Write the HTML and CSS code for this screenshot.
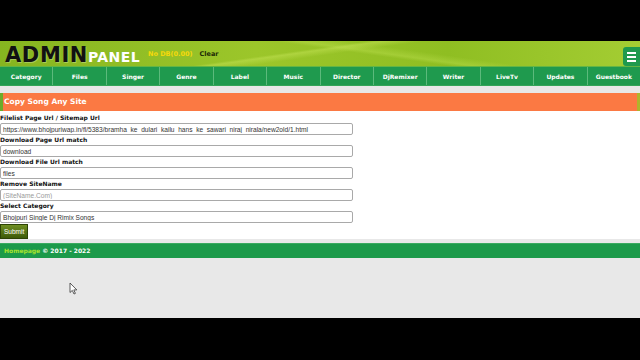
FILE: index.html
```html
<!DOCTYPE html>
<html lang="en">
<head>
    <meta charset="UTF-8" />
    <meta name="viewport" content="width=device-width, initial-scale=1.0"/>
    <title>Admin Panel - Copy Song Any Site</title>
    <link rel="stylesheet" href="styles.css">
</head>
<body>
    <div class="page">
        <div class="header">
            <div class="logo"><span class="admin">ADMIN</span><span class="panel">PANEL</span></div>
            <span class="db">No DB(0.00)</span>
            <a class="clear" href="#">Clear</a>
            <div class="menu-btn">
                <span></span><span></span><span></span>
            </div>
        </div>

        <div class="nav">
            <a href="#">Category</a>
            <a href="#">Files</a>
            <a href="#">Singer</a>
            <a href="#">Genre</a>
            <a href="#">Label</a>
            <a href="#">Music</a>
            <a href="#">Director</a>
            <a href="#">DjRemixer</a>
            <a href="#">Writer</a>
            <a href="#">LiveTv</a>
            <a href="#">Updates</a>
            <a href="#">Guestbook</a>
        </div>

        <div class="title">Copy Song Any Site</div>

        <form class="form">
            <label>Filelist Page Url / Sitemap Url</label>
            <input type="text" value="https://www.bhojpuriwap.in/fl/5383/bramha_ke_dulari_kailu_hans_ke_sawari_niraj_nirala/new2old/1.html">
            <label>Download Page Url match</label>
            <input type="text" value="download">
            <label>Download File Url match</label>
            <input type="text" value="files">
            <label>Remove SiteName</label>
            <input type="text" placeholder="(SiteName.Com)">
            <label>Select Category</label>
            <input type="text" value="Bhojpuri Single Dj Rimix Songs">
            <button type="button" class="submit">Submit</button>
        </form>

        <div class="footer">
            <a href="#">Homepage</a> &copy; 2017 - 2022
        </div>

        <div class="bottom">
            <svg class="cursor" width="9" height="13" viewBox="0 0 9 13">
                <path d="M1 1 L1 10.5 L3.3 8.4 L5 12 L6.4 11.4 L4.8 7.9 L7.8 7.9 Z" fill="#fff" stroke="#333" stroke-width="0.8"/>
            </svg>
        </div>
    </div>
</body>
</html>
```

FILE: styles.css
```css
body {
    margin: 0;
    background: #000;
    padding-top: 41px;
    height: 360px;
    box-sizing: border-box;
    font-family: "DejaVu Sans", Verdana, sans-serif;
}

.page {
    width: 640px;
    height: 277px;
    background: #e8e8e8;
    overflow: hidden;
}

.header {
    height: 25px;
    display: flex;
    align-items: center;
    padding-left: 5px;
    background:
        linear-gradient(172deg, transparent 45%, rgba(200, 230, 90, 0.45) 47%, transparent 52%),
        linear-gradient(8deg, transparent 55%, rgba(190, 225, 80, 0.4) 58%, transparent 64%),
        linear-gradient(90deg, #86b520 0%, #9cc62a 40%, #8fbe22 70%, #a4cd33 100%);
    box-sizing: border-box;
}

.logo {
    display: flex;
    align-items: baseline;
    margin-top: 2px;
}

.admin {
    font-size: 21px;
    font-weight: bold;
    color: #111;
    letter-spacing: 0.6px;
    text-shadow: 1px 1px 0 rgba(255, 255, 255, 0.25);
}

.panel {
    font-size: 14px;
    font-weight: bold;
    color: #fff;
    letter-spacing: 0.4px;
}

.db {
    margin-left: 8px;
    font-size: 6.5px;
    font-weight: bold;
    color: #f5d90a;
}

.clear {
    margin-left: 7px;
    font-size: 6.5px;
    font-weight: bold;
    color: #1d2a06;
    text-decoration: none;
}

.menu-btn {
    margin-left: auto;
    margin-top: 6px;
    width: 17px;
    height: 19px;
    background: #1f9a4e;
    border-radius: 3px 0 0 3px;
    display: flex;
    flex-direction: column;
    justify-content: center;
    align-items: center;
    gap: 2px;
}

.menu-btn span {
    display: block;
    width: 9px;
    height: 2px;
    background: #fff;
}

.nav {
    display: flex;
    height: 18px;
    background: #1f9a4e;
    border-top: 1px solid #63b544;
    border-bottom: 1px solid #33a558;
}

.nav a {
    flex: 1;
    display: flex;
    align-items: center;
    justify-content: center;
    color: #fff;
    font-size: 6px;
    font-weight: bold;
    text-decoration: none;
    border-left: 1px solid #5cba7c;
}

.nav a:first-child {
    border-left: none;
}

.title {
    margin-top: 7px;
    height: 18px;
    line-height: 18px;
    background: #fb7943;
    border-left: 3px solid #6cab2a;
    border-right: 3px solid #b0b42c;
    color: #fff;
    font-size: 7.5px;
    font-weight: bold;
    padding-left: 1px;
}

.form {
    background: #fff;
    padding-top: 2px;
    height: 128px;
    display: flex;
    flex-direction: column;
    align-items: flex-start;
    box-sizing: border-box;
}

.form label {
    font-size: 6px;
    font-weight: bold;
    color: #111;
    height: 10px;
    line-height: 10px;
}

.form input {
    width: 353px;
    height: 12.5px;
    box-sizing: border-box;
    margin: 0;
    padding: 0 2px;
    border: 1px solid #a9a9a9;
    border-radius: 2px;
    font-family: "Liberation Sans", Arial, sans-serif;
    font-size: 6.6px;
    color: #333;
}

.form input::placeholder {
    color: #999;
}

.submit {
    margin-top: 1px;
    height: 15px;
    padding: 0 3px;
    border: 1px solid #2d4404;
    background: linear-gradient(#6f8f22, #3d5a08);
    color: #fff;
    font-family: "Liberation Sans", Arial, sans-serif;
    font-size: 6.5px;
}

.footer {
    margin-top: 4px;
    height: 14px;
    line-height: 14px;
    background: #1c9a4a;
    color: #fff;
    font-size: 6px;
    font-weight: bold;
    padding-left: 4px;
    border-top: 1px solid #3aaa60;
}

.footer a {
    color: #a6e22e;
    text-decoration: none;
}

.bottom {
    position: relative;
    height: 59px;
}

.cursor {
    position: absolute;
    left: 69px;
    top: 24px;
}
```
